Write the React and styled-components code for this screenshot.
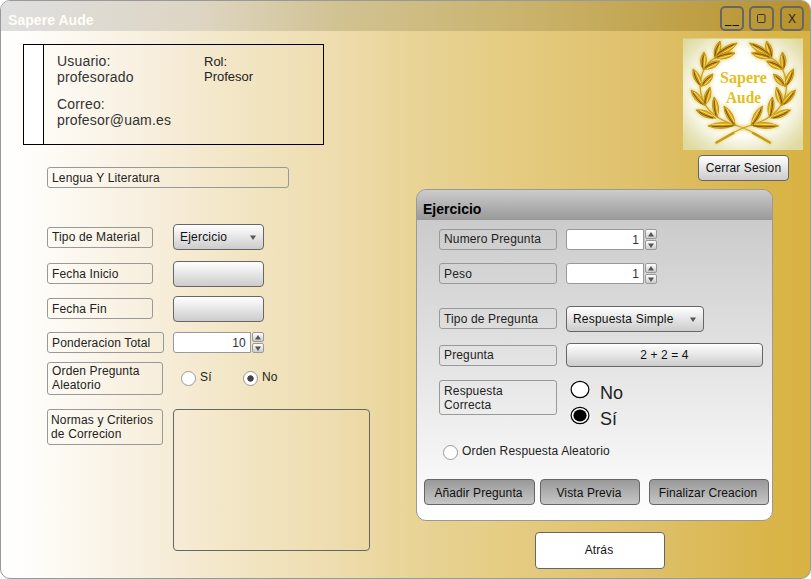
import React from "react";
import styled, { createGlobalStyle } from "styled-components";

const Global = createGlobalStyle`
  * { box-sizing: border-box; }
  body { margin: 0; background: #fff; overflow: hidden; font: 12px/14px "Liberation Sans", Arial, sans-serif; color: #222; }
  button, input, textarea { font: inherit; color: inherit; margin: 0; }
`;

const Window = styled.main`
  width: 811px; height: 579px; overflow: hidden;
  display: flex; flex-direction: column;
  border: 1px solid #999; border-radius: 10px;
  background: linear-gradient(90deg, #fff 0%, #fefcf7 5%, #f8f0e0 17%, #f2e5c3 30%, #eddcac 42%, #ead69d 48%, #e5cd84 61%, #dfc06a 80%, #dab64c 93%, #d8b242 100%);
`;
const TitleBar = styled.header`
  height: 30px; flex: none; display: flex; align-items: flex-end;
  padding: 0 6px 0 7px;
  background: linear-gradient(90deg, #dfdfe0 0%, #ddd5c2 25%, #d1c291 42%, #c9b36c 65%, #b8922b 100%);
`;
const Title = styled.h1`
  margin: 0 auto 2px 0; font-size: 14px; line-height: 18px; color: #fffdf6; letter-spacing: .05px;
`;
const WindowButton = styled.button`
  width: ${p => p.$w || 24}px; height: 25px; margin-left: ${p => p.$gap || 0}px; padding: 0;
  display: flex; align-items: center; justify-content: center;
  border: 2px solid #666; border-radius: 5px; background: transparent;
`;
const Body = styled.div`display: flex; flex: 1; min-height: 0;`;
const Left = styled.section`width: 415px; flex: none; padding: 13px 0 0 22px;`;
const Right = styled.section`flex: 1; display: flex; flex-direction: column; padding-top: 7px;`;

const UserCard = styled.div`
  width: 301px; height: 101px; display: flex; border: 1px solid #000;
`;
const CardStrip = styled.div`width: 20px; flex: none; background: #fff; border-right: 1px solid #000;`;
const UserInfo = styled.div`
  width: 160px; flex: none; padding: 8px 0 0 13px; font-size: 14px; line-height: 16px;
  letter-spacing: .18px; color: #333;
`;
const RoleInfo = styled.div`padding-top: 9px; font-size: 13px; line-height: 15px;`;
const Line = styled.div`margin-top: ${p => p.$top || 0}px; white-space: nowrap;`;

const Form = styled.div`padding-left: ${p => p.$left}px;`;
const Row = styled.div`
  display: flex; align-items: flex-start;
  margin-top: ${p => p.$top}px; height: ${p => p.$h || 26}px;
`;
const Label = styled.div`
  flex: none; width: ${p => p.$w}px; height: ${p => p.$h || 21}px;
  margin: ${p => p.$down || 0}px ${p => p.$gap || 0}px 0 0;
  padding: ${p => p.$pad ?? 3}px 0 0 ${p => p.$indent || 4}px;
  border: 1px solid #999; border-radius: 3px; white-space: pre-line; letter-spacing: .15px;
`;
const PushButton = styled.button`
  width: ${p => p.$w}px; height: ${p => p.$h || 26}px; margin-left: ${p => p.$left || 0}px;
  padding: ${p => p.$dark ? "2px" : 0} ${p => p.$dark || p.$plain ? "2px" : 0} ${p => p.$plain ? "2px" : 0} 0; flex: none;
  border: 1px solid #666; border-radius: 4px; color: #111; letter-spacing: .1px;
  background: ${p => p.$dark ? "linear-gradient(#999, #c6c6c6)" : p.$plain ? "#fff" : "linear-gradient(#fff, #ccc)"};
`;
const SelectButton = styled(PushButton)`
  display: flex; align-items: center; justify-content: space-between; padding: 0 7px 0 6px;
  letter-spacing: .2px;
`;
const NumberBox = styled.div`display: flex; gap: 1px; height: 21px;`;
const NumberInput = styled.input`
  width: 78px; height: 21px; padding: 0 4px 0 0; text-align: right; letter-spacing: .2px;
  border: 1px solid #999; border-radius: 3px 0 0 3px; background: #fff; color: #333;
`;
const Arrows = styled.div`display: flex; flex-direction: column; gap: 1px;`;
const Arrow = styled.button`
  width: 12px; height: 10px; padding: 0; display: flex; align-items: center; justify-content: center;
  border: 1px solid #999; border-radius: 2px; background: linear-gradient(#fff, #ccc);
`;
const RadioLabel = styled.label`
  display: flex; align-items: flex-start; margin-left: ${p => p.$left || 0}px; width: ${p => p.$w || "auto"};
  gap: 4px; white-space: nowrap; letter-spacing: .15px;
`;
const Radio = styled.i`
  width: 15px; height: 15px; margin-top: 1px; border-radius: 50%; border: 1px solid #999;
  background: ${p => p.$on ? "radial-gradient(circle, #444 2.8px, #fff 3.6px)" : "#fff"};
`;
const Notes = styled.textarea`
  width: 197px; height: 142px; padding: 4px; resize: none; margin-left: 10px;
  border: 1px solid #666; border-radius: 4px; background: transparent;
`;
const LogoArea = styled.div`width: 120px; height: 112px; margin-left: 267px; flex: none;`;
const Panel = styled.section`
  width: 357px; height: 332px; margin-top: 8px; flex: none;
  border: 1px solid #999; border-radius: 10px; overflow: hidden;
  background: linear-gradient(#c6c6c6, #fff);
`;
const PanelHead = styled.h2`
  margin: 0; height: 30px; padding: 10px 0 0 6px; font-size: 14px; line-height: 18px; color: #000;
  background: linear-gradient(#ccc, #999);
`;
const Options = styled.div`padding-left: 13px;`;
const BigOption = styled.div`
  display: flex; height: 26px; align-items: flex-start; gap: 10px;
  font-size: 18px; line-height: 27px; color: #222;
`;
const Actions = styled.div`display: flex; padding-left: 7px; margin-top: 18px;`;

const Tri = ({ up }) => (
  <svg width="6" height="5" viewBox="0 0 6 5"><path d={up ? "M3 0 6 4.5H0Z" : "M0 .5H6L3 5Z"} fill="#555" /></svg>
);
const Stepper = ({ value }) => (
  <NumberBox>
    <NumberInput readOnly value={value} />
    <Arrows><Arrow><Tri up /></Arrow><Arrow><Tri /></Arrow></Arrows>
  </NumberBox>
);
const BigRadio = ({ on }) => (
  <svg width="20" height="20" viewBox="0 0 20 20">
    <ellipse cx="10" cy="9.5" rx="8.9" ry="8.2" fill="#fff" stroke="#000" strokeWidth="1.2" />
    {on && <ellipse cx="10" cy="9.5" rx="6.6" ry="6.1" />}
  </svg>
);

/* Leaves of the left branch: base x, base y, tip x, tip y. */
const leaves = [
  [32, 20, 37, 3], [33, 18, 54, 5], [33, 20, 52, 15],
  [20, 31, 21, 14], [21, 31, 37, 23],
  [18, 48, 10, 31], [19, 48, 30, 36],
  [21, 67, 8, 52], [22, 67, 27, 49],
  [32, 80, 13, 72], [34, 79, 31, 59],
  [52, 87, 25, 88], [52, 87, 41, 68],
].map(([x, y, tx, ty]) => ({
  x, y, n: Math.hypot(tx - x, ty - y), a: Math.atan2(ty - y, tx - x) * 180 / Math.PI,
}));
const stem = "M32 20Q18 28 17 48Q18 77 52 87C65 91 76 97 87 105";
const outline = n => `M0 0Q${n * .5} -6.2 ${n} 0Q${n * .5} 6.2 0 0Z`;
const place = l => `translate(${l.x} ${l.y}) rotate(${l.a})`;

const Branch = () => (
  <g strokeLinecap="round" strokeLinejoin="round">
    <g fill="none" stroke="#dccb62" strokeOpacity=".55" filter="url(#glow)">
      <path d={stem} strokeWidth="4" />
      {leaves.map((l, i) => <path key={i} transform={place(l)} d={outline(l.n)} strokeWidth="3.5" />)}
    </g>
    <path d={stem} fill="none" stroke="#cfa016" strokeWidth="1.3" />
    <path d="M70 95 87 104.5" stroke="#c99a10" strokeWidth="2.4" />
    {leaves.map((l, i) => (
      <g key={i} transform={place(l)}>
        <path d={outline(l.n)} fill="url(#leaf)" stroke="#bd8d0c" strokeWidth=".8" />
        <path d={`M2 -.8Q${l.n * .5} -2.2 ${l.n - 4} -.4`} fill="none" stroke="#7a4a06" strokeWidth=".9" />
        <path d={`M3 1H${l.n - 4}`} stroke="#ffe765" strokeWidth=".8" />
      </g>
    ))}
  </g>
);
const Logo = () => (
  <svg width="120" height="112" viewBox="0 0 120 112">
    <defs>
      <filter id="glow" x="-20%" y="-20%" width="140%" height="140%"><feGaussianBlur stdDeviation="1.4" /></filter>
      <radialGradient id="halo" cx="50%" cy="48%" r="66%">
        <stop offset="0" stopColor="#fff" /><stop offset=".58" stopColor="#fffffa" />
        <stop offset=".85" stopColor="#e8e5bd" /><stop offset="1" stopColor="#dfda9f" />
      </radialGradient>
      <linearGradient id="leaf" x1="0" y1="0" x2="0" y2="1">
        <stop offset="0" stopColor="#edc32a" /><stop offset=".5" stopColor="#c28d12" /><stop offset="1" stopColor="#edc52b" />
      </linearGradient>
    </defs>
    <rect y=".5" width="120" height="111.5" fill="url(#halo)" />
    <Branch />
    <g transform="translate(120.5 0) scale(-1 1)"><Branch /></g>
    <g fill="#e3c01c" fontFamily="Liberation Serif, serif" fontWeight="700" fontSize="16">
      <text x="37" y="44.5" textLength="47" lengthAdjust="spacingAndGlyphs">Sapere</text>
      <text x="43" y="64.5" textLength="35" lengthAdjust="spacingAndGlyphs">Aude</text>
    </g>
  </svg>
);

export default function App() {
  return (
    <>
      <Global />
      <Window>
        <TitleBar>
          <Title>Sapere Aude</Title>
          <WindowButton aria-label="Minimizar"><svg width="14" height="16"><path d="M0 14.5H6.5M7.5 14.5H14" stroke="#111" /></svg></WindowButton>
          <WindowButton $w={25} $gap={5} aria-label="Maximizar"><svg width="9" height="9"><rect x=".5" y=".5" width="7.5" height="8" rx="1" fill="none" stroke="#333" /></svg></WindowButton>
          <WindowButton $gap={6}>X</WindowButton>
        </TitleBar>
        <Body>
          <Left>
            <UserCard>
              <CardStrip />
              <UserInfo>
                <Line>Usuario:</Line><Line>profesorado</Line>
                <Line $top={11}>Correo:</Line><Line>profesor@uam.es</Line>
              </UserInfo>
              <RoleInfo><Line>Rol:</Line><Line>Profesor</Line></RoleInfo>
            </UserCard>
            <Form $left={24}>
              <Row $top={22} $h={21}><Label $w={242}>Lengua Y Literatura</Label></Row>
              <Row $top={36}><Label $w={106} $down={3} $gap={20} $pad={2}>Tipo de Material</Label><SelectButton $w={91}>Ejercicio<Tri /></SelectButton></Row>
              <Row $top={11}><Label $w={106} $down={2} $gap={20}>Fecha Inicio</Label><PushButton $w={91} /></Row>
              <Row $top={9}><Label $w={106} $down={2} $gap={20}>Fecha Fin</Label><PushButton $w={91} /></Row>
              <Row $top={10} $h={21}><Label $w={117} $gap={9}>Ponderacion Total</Label><Stepper value="10" /></Row>
              <Row $top={9} $h={33}>
                <Label $w={116} $h={33} $pad={1} $gap={18}>{"Orden Pregunta\nAleatorio"}</Label>
                <Row $top={8}>
                  <RadioLabel $w="62px"><Radio />Sí</RadioLabel>
                  <RadioLabel><Radio $on />No</RadioLabel>
                </Row>
              </Row>
              <Row $top={14} $h={142}><Label $w={116} $h={36} $indent={3}>{"Normas y Criterios\nde Correcion"}</Label><Notes /></Row>
            </Form>
          </Left>
          <Right>
            <LogoArea><Logo /></LogoArea>
            <Row $top={5}><PushButton $w={91} $left={282}>Cerrar Sesion</PushButton></Row>
            <Panel>
              <PanelHead>Ejercicio</PanelHead>
              <Form $left={22}>
                <Row $top={9} $h={21}><Label $w={118} $gap={9} $pad={2}>Numero Pregunta</Label><Stepper value="1" /></Row>
                <Row $top={13} $h={21}><Label $w={118} $gap={9}>Peso</Label><Stepper value="1" /></Row>
                <Row $top={22}><Label $w={118} $down={2} $gap={9}>Tipo de Pregunta</Label><SelectButton $w={138}>Respuesta Simple<Tri /></SelectButton></Row>
                <Row $top={11} $h={24}><Label $w={118} $down={2} $gap={9} $pad={2}>Pregunta</Label><PushButton $w={197} $h={24}>2 + 2 = 4</PushButton></Row>
                <Row $top={13} $h={52}>
                  <Label $w={118} $h={35}>{"Respuesta\nCorrecta"}</Label>
                  <Options>
                    <BigOption><BigRadio />No</BigOption>
                    <BigOption><BigRadio on />Sí</BigOption>
                  </Options>
                </Row>
                <Row $top={12} $h={17}><RadioLabel $left={4}><Radio />Orden Respuesta Aleatorio</RadioLabel></Row>
              </Form>
              <Actions>
                <PushButton $dark $w={111}>Añadir Pregunta</PushButton>
                <PushButton $dark $w={100} $left={5}>Vista Previa</PushButton>
                <PushButton $dark $w={120} $left={9}>Finalizar Creacion</PushButton>
              </Actions>
            </Panel>
            <Row $top={11} $h={37}><PushButton $plain $w={130} $h={37} $left={119}>Atrás</PushButton></Row>
          </Right>
        </Body>
      </Window>
    </>
  );
}
